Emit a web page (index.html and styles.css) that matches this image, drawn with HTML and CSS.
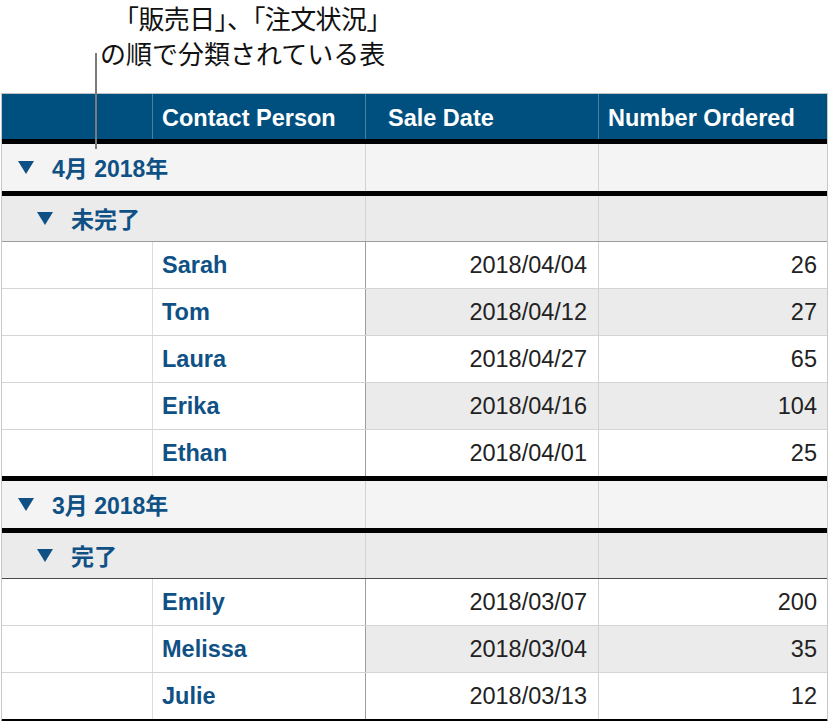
FILE: index.html
```html
<!DOCTYPE html>
<html lang="ja">
<head>
<meta charset="utf-8">
<title>分類された表</title>
<link rel="stylesheet" href="styles.css">
</head>
<body>
<div class="page">
  <div class="caption">
    <div class="cap-line first">「販売日」、「注文状況」</div>
    <div class="cap-line">の順で分類されている表</div>
  </div>
  <div class="leader"></div>
  <div class="table">
    <div class="row head">
      <div class="cell c1"></div>
      <div class="cell c2 hname">Contact Person</div>
      <div class="cell c3 hdate">Sale Date</div>
      <div class="cell c4 hnum">Number Ordered</div>
    </div>

    <div class="row group g1">
      <div class="cell gl"><svg class="tri" viewBox="0 0 16 13"><polygon points="0,0 16,0 8,13"/></svg><span>4月 2018年</span></div>
      <div class="cell g3"></div>
      <div class="cell g4"></div>
    </div>
    <div class="row group sub s1">
      <div class="cell gl sl"><svg class="tri" viewBox="0 0 16 13"><polygon points="0,0 16,0 8,13"/></svg><span>未完了</span></div>
      <div class="cell g3"></div>
      <div class="cell g4"></div>
    </div>
    <div class="row data first">
      <div class="cell c1"></div><div class="cell c2 name">Sarah</div><div class="cell c3 date">2018/04/04</div><div class="cell c4 num">26</div>
    </div>
    <div class="row data alt">
      <div class="cell c1"></div><div class="cell c2 name">Tom</div><div class="cell c3 date">2018/04/12</div><div class="cell c4 num">27</div>
    </div>
    <div class="row data">
      <div class="cell c1"></div><div class="cell c2 name">Laura</div><div class="cell c3 date">2018/04/27</div><div class="cell c4 num">65</div>
    </div>
    <div class="row data alt">
      <div class="cell c1"></div><div class="cell c2 name">Erika</div><div class="cell c3 date">2018/04/16</div><div class="cell c4 num">104</div>
    </div>
    <div class="row data">
      <div class="cell c1"></div><div class="cell c2 name">Ethan</div><div class="cell c3 date">2018/04/01</div><div class="cell c4 num">25</div>
    </div>

    <div class="row group g2">
      <div class="cell gl"><svg class="tri" viewBox="0 0 16 13"><polygon points="0,0 16,0 8,13"/></svg><span>3月 2018年</span></div>
      <div class="cell g3"></div>
      <div class="cell g4"></div>
    </div>
    <div class="row group sub s2">
      <div class="cell gl sl"><svg class="tri" viewBox="0 0 16 13"><polygon points="0,0 16,0 8,13"/></svg><span>完了</span></div>
      <div class="cell g3"></div>
      <div class="cell g4"></div>
    </div>
    <div class="row data first dark">
      <div class="cell c1"></div><div class="cell c2 name">Emily</div><div class="cell c3 date">2018/03/07</div><div class="cell c4 num">200</div>
    </div>
    <div class="row data alt">
      <div class="cell c1"></div><div class="cell c2 name">Melissa</div><div class="cell c3 date">2018/03/04</div><div class="cell c4 num">35</div>
    </div>
    <div class="row data">
      <div class="cell c1"></div><div class="cell c2 name">Julie</div><div class="cell c3 date">2018/03/13</div><div class="cell c4 num">12</div>
    </div>
  </div>
</div>
</body>
</html>
```
FILE: styles.css
```css
html, body {
  margin: 0;
  padding: 0;
  background: #ffffff;
}

body {
  font-family: "Liberation Sans", "Noto Sans CJK JP", sans-serif;
  color: #222222;
}

.page {
  position: relative;
  width: 830px;
}

.caption {
  height: 93px;
  box-sizing: border-box;
  padding-left: 100px;
  font-family: "Noto Sans CJK JP", sans-serif;
  font-size: 26px;
  line-height: 35px;
  color: #111111;
}

.cap-line {
  white-space: nowrap;
}

.cap-line.first {
  padding-left: 13px;
  letter-spacing: -0.6px;
}

.leader {
  position: absolute;
  left: 95px;
  top: 53px;
  width: 2px;
  height: 96px;
  background: #7b7b7b;
  z-index: 2;
}

.table {
  margin-left: 1px;
  width: 827px;
  box-sizing: border-box;
  border-top: 1px solid #c2c2c2;
  border-left: 1px solid #c8c8c8;
  border-right: 1px solid #c8c8c8;
  border-bottom: 5px solid #000000;
}

.row {
  display: grid;
  grid-template-columns: 150px 213px 233px 229px;
  box-sizing: border-box;
}

.cell {
  display: flex;
  align-items: center;
  box-sizing: border-box;
  min-width: 0;
  white-space: nowrap;
}

/* header */
.head {
  height: 45px;
  background: #00507f;
  color: #ffffff;
  font-weight: bold;
  font-size: 23.5px;
}

.head .cell {
  padding-top: 3px;
}

.head .c2,
.head .c3,
.head .c4 {
  border-left: 1px solid #4d7fa3;
}

.hname { padding-left: 9px; }
.hdate { padding-left: 22px; }
.hnum { padding-left: 9px; }

/* group rows */
.group {
  grid-template-columns: 363px 233px 229px;
  height: 51.5px;
  border-top: 5px solid #000000;
  background: #f4f4f4;
}

.sub {
  height: 50.5px;
  background: #ebebeb;
}

.g3,
.g4 {
  border-left: 1px solid #d3d3d3;
}

.gl {
  padding-left: 16px;
  gap: 18px;
  color: #0f5185;
  font-weight: bold;
  font-size: 23px;
}

.sl {
  padding-left: 35px;
}

.tri {
  width: 16px;
  height: 13px;
  flex: none;
  fill: #0f5185;
}

/* data rows */
.data {
  height: 47px;
  border-top: 1px solid #d4d4d4;
  font-size: 23.5px;
}

.data .cell {
  padding-top: 1px;
}

.data.first {
  border-top-color: #9c9c9c;
}

.data.first.dark {
  border-top-color: #4a4a4a;
}

.data .c2 {
  border-left: 1px solid #dcdcdc;
}

.data .c3 {
  border-left: 1px solid #9e9e9e;
}

.data .c4 {
  border-left: 1px solid #d2d2d2;
}

.data.alt .c3,
.data.alt .c4 {
  background: #ebebeb;
}

.name {
  padding-left: 9px;
  color: #0f5185;
  font-weight: bold;
}

.date {
  justify-content: flex-end;
  padding-right: 11px;
  color: #222222;
}

.num {
  justify-content: flex-end;
  padding-right: 10px;
  color: #222222;
}
```
